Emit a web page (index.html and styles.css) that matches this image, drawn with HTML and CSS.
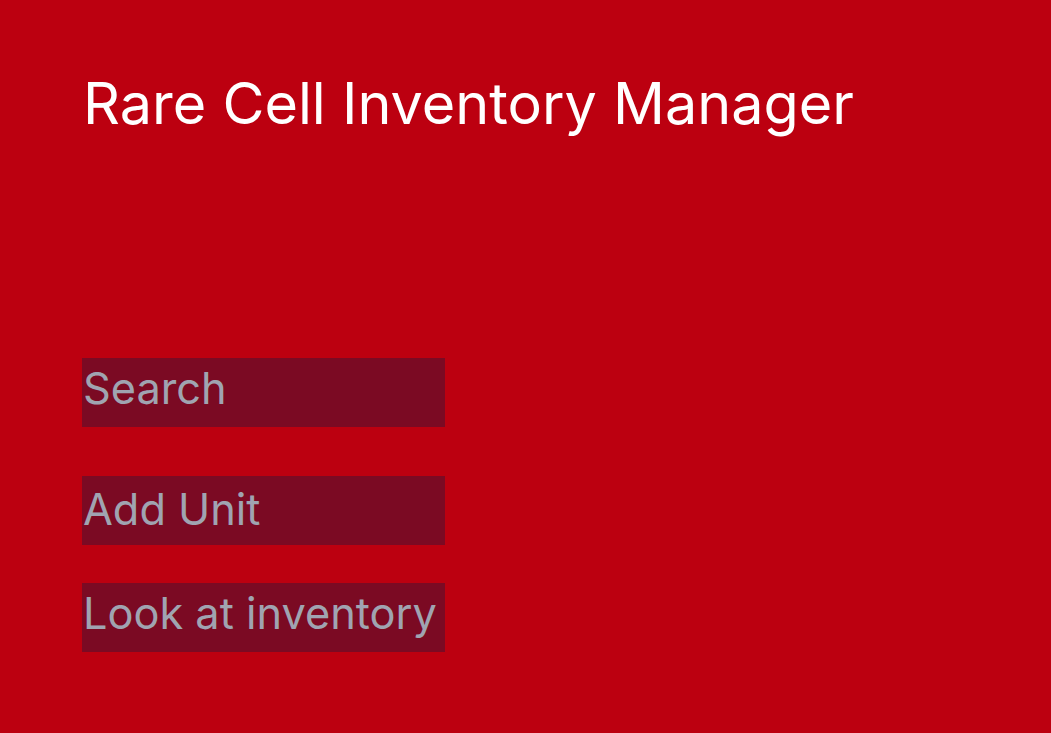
FILE: index.html
```
<!DOCTYPE html>
<html lang="en">
<head>
    <meta charset="UTF-8">
    <meta name="viewport" content="width=device-width, initial-scale=1.0">
    <title>Rare Cell Inventory Manager</title>
    <link rel="stylesheet" href="styles.css">
</head>
<body>

<div class="container">
    <h1 class="title">Rare Cell Inventory Manager</h1>

    <div class="menu">
        <input type="text" class="menu-item search" placeholder="Search">
        <button type="button" class="menu-item add">Add Unit</button>
        <button type="button" class="menu-item look">Look at inventory</button>
    </div>
</div>

</body>
</html>
```

FILE: styles.css
```
html, body {
    margin: 0;
    height: 100%;
}
body {
    font-family: Inter, "Noto Sans", sans-serif;
    background-color: #bc0010;
}
.container {
    padding: 69px 82px 0 82px;
}
.title {
    margin: 0 0 0 1px;
    font-size: 57.5px;
    font-weight: 400;
    color: #ffffff;
    line-height: 69px;
}
.menu {
    display: flex;
    flex-direction: column;
    align-items: flex-start;
    margin-top: 220px;
}
.menu-item {
    width: 363px;
    height: 69px;
    box-sizing: border-box;
    margin: 0;
    padding: 0 0 10px 1px;
    border: none;
    border-radius: 0;
    background-color: #7b0a23;
    color: #a0a4b1;
    font-family: Inter, "Noto Sans", sans-serif;
    font-size: 43.3px;
    text-align: left;
    outline: none;
}
.search::placeholder {
    color: #a0a4b1;
    opacity: 1;
}
.add {
    margin-top: 49px;
    padding-bottom: 4px;
}
.look {
    margin-top: 38px;
}
```
